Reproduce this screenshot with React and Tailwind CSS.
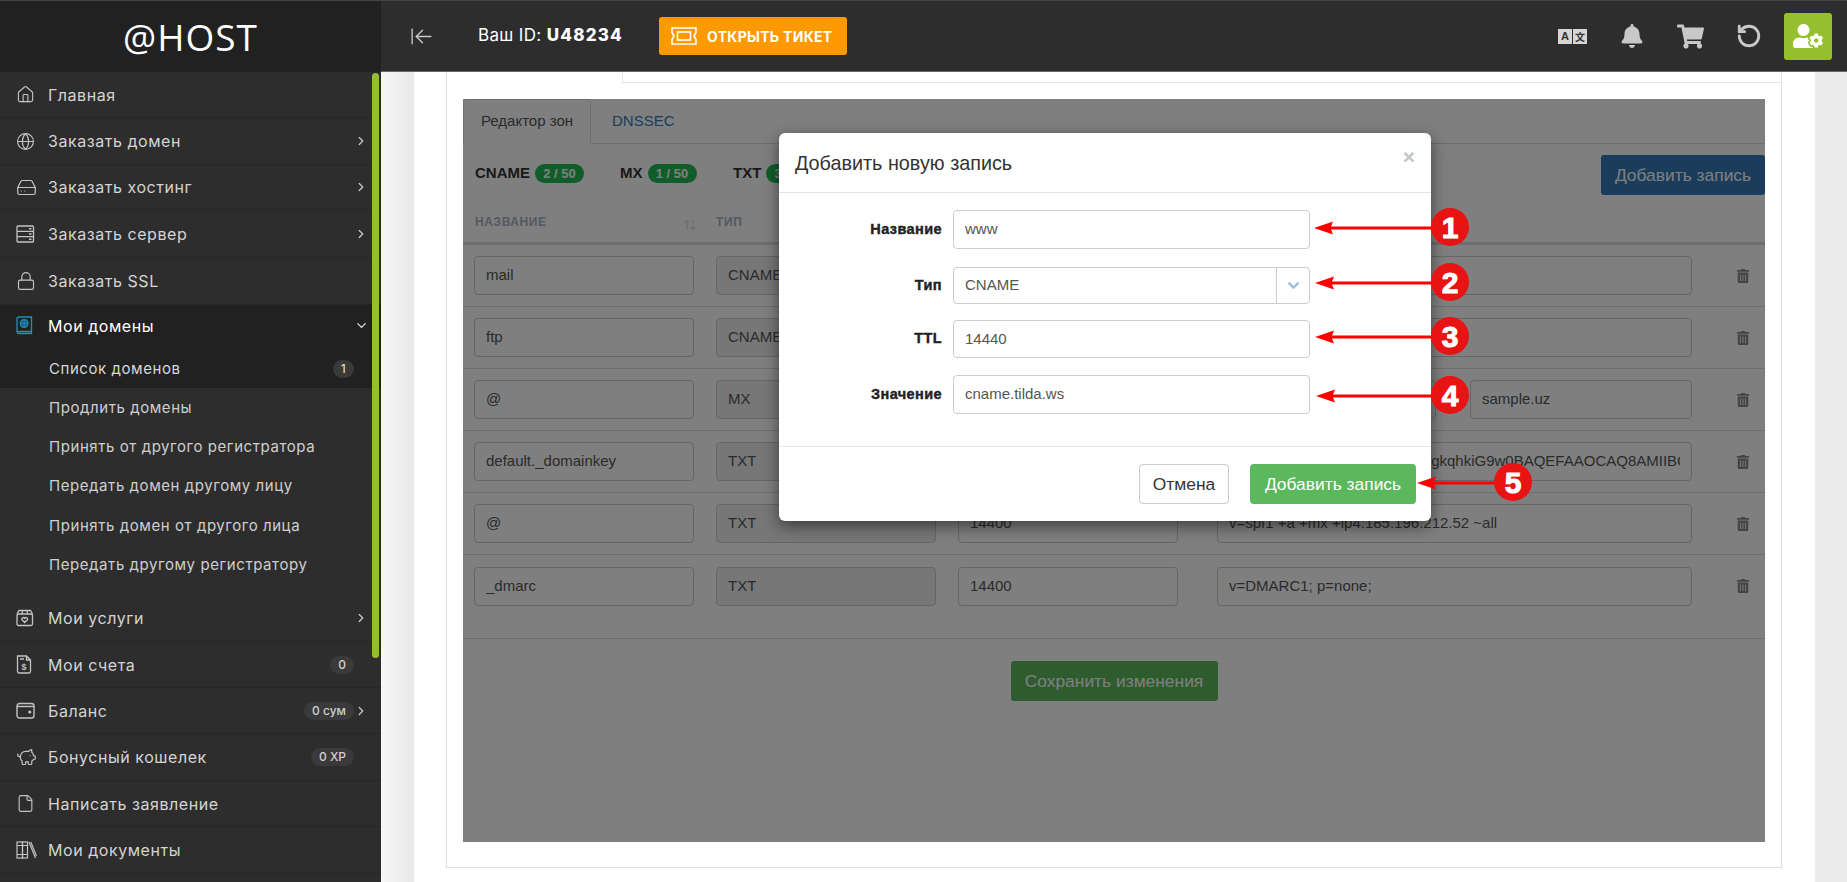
import React from "react";
import { ArrowLeftToLine, ArrowUpDown, ChevronDown, ChevronRight, File, Globe, HardDrive, House, Lock, PiggyBank, RotateCcw } from "lucide-react";
import { FaBell, FaShoppingCart, FaTrashAlt, FaUserCog } from "react-icons/fa";

const side = "font-['Inter','Liberation_Sans',sans-serif]";

function BookIcon() {
  return (
    <svg width="17" height="19" viewBox="0 0 17 19" fill="none" stroke="#1f8fb8" strokeWidth="1.3">
      <path d="M1 16V2.500A1.500 1.500 0 0 1 2.500 1H15.500V17.500H2.500A1.500 1.500 0 0 1 1 16ZM1 15.500H15.500" />
      <circle cx="8.200" cy="7.500" r="3.800" fill="#155f7c" />
      <path d="M4.400 7.500H12M8.200 3.700V11.300" strokeWidth="0.8" />
    </svg>
  );
}

function BoxIcon() {
  return (
    <svg width="18" height="18" viewBox="0 0 18 18" fill="none" stroke="#c4c4c4" strokeWidth="1.300">
      <rect x="1" y="5" width="15.500" height="11.500" rx="1.500" />
      <path d="M1 5 3 1.500H14.500L16.500 5M6.500 1.500 6 5M11 1.500 11.500 5" />
      <path d="M8.700 13.500 6 10.800C5 9 7.600 7.600 8.700 9.300 9.800 7.600 12.400 9 11.400 10.800Z" />
    </svg>
  );
}

function InvoiceIcon() {
  return (
    <svg width="16" height="19" viewBox="0 0 16 19" fill="none" stroke="#c4c4c4" strokeWidth="1.300">
      <path d="M1.500 1H10.500L14.500 5V16.500A1.500 1.500 0 0 1 13 18H3A1.500 1.500 0 0 1 1.500 16.500ZM10.500 1V5H14.500M4 4H8" />
      <text x="8" y="15" textAnchor="middle" fontSize="9" fontWeight="700" fill="#c4c4c4" stroke="none" fontFamily="Liberation Sans">$</text>
    </svg>
  );
}

function ServerIcon() {
  return (
    <svg width="19" height="18" viewBox="0 0 19 18" fill="none" stroke="#c4c4c4" strokeWidth="1.300">
      <rect x="1" y="1" width="16.500" height="16" rx="1" />
      <path d="M1 6.300H17.500M1 11.700H17.500" />
      <path d="M13 3.700H15.500M13 9H15.500M13 14.300H15.500" strokeWidth="1.500" />
    </svg>
  );
}

function WalletIcon() {
  return (
    <svg width="19" height="17" viewBox="0 0 19 17" fill="none" stroke="#c4c4c4" strokeWidth="1.400">
      <rect x="1" y="1.500" width="17" height="14.500" rx="2.500" />
      <path d="M1 4.500H18" />
      <circle cx="13.800" cy="10" r="0.900" fill="#c4c4c4" />
    </svg>
  );
}

function LibraryIcon() {
  return (
    <svg width="21" height="18" viewBox="0 0 21 18" fill="none" stroke="#c4c4c4" strokeWidth="1.200">
      <rect x="1" y="1" width="5.500" height="16" />
      <rect x="6.500" y="1" width="5" height="16" />
      <path d="M1 4.500H11.500M1 13.500H11.500M13 1 19.500 17M14.800 1 20.500 15" />
    </svg>
  );
}

function TicketIcon() {
  return (
    <svg width="26" height="18" viewBox="0 0 26 18" fill="none" stroke="#fff" strokeWidth="1.600">
      <path d="M1 1H25V5.500L23 9 25 12.500V17H1V12.500L3 9 1 5.500Z" />
      <rect x="6.500" y="5" width="13" height="8" />
    </svg>
  );
}

const iconProps = { size: 19, strokeWidth: 1.4, color: "#c4c4c4" };

function Badge({ children, className = "" }) {
  return (
    <span className={`flex h-[18px] items-center justify-center rounded-full bg-[#3a3a3a] text-[12px] font-medium text-[#d0d0d0] ${className}`}>
      {children}
    </span>
  );
}

function MainItem({ icon, label, h = "h-[47px]", arrow, badge }) {
  return (
    <div className={`flex shrink-0 items-center border-b border-[#262626] pl-4 pr-[13px] text-[#d4d4d4] ${h}`}>
      <span className="flex w-8 shrink-0 items-center">{icon}</span>
      <span className="text-[16px] tracking-[0.55px]">{label}</span>
      <span className="ml-auto flex items-center">
        {badge}
        {arrow ? <ChevronRight size={14} strokeWidth={2.2} color="#c8c8c8" /> : <span className={badge ? "w-[14px]" : ""} />}
      </span>
    </div>
  );
}

function SubItem({ label, h = "h-[39px]" }) {
  return (
    <div className={`flex shrink-0 items-center pl-[49px] text-[15px] tracking-[0.57px] text-[#cfcfcf] ${h}`}>{label}</div>
  );
}

function Sidebar() {
  return (
    <aside className={`relative flex w-[381px] shrink-0 flex-col overflow-hidden bg-[#2d2d2d] ${side}`}>
      <div className="flex h-[72px] shrink-0 items-center justify-center border-t border-[#444] bg-[#212121] font-['Open_Sans',sans-serif] text-[37px] tracking-[1px] text-white">
        @HOST
      </div>
      <MainItem h="h-[46px]" icon={<House {...iconProps} />} label="Главная" />
      <MainItem icon={<Globe {...iconProps} />} label="Заказать домен" arrow />
      <MainItem h="h-[45px]" icon={<HardDrive {...iconProps} size={21} />} label="Заказать хостинг" arrow />
      <MainItem h="h-[48px]" icon={<ServerIcon />} label="Заказать сервер" arrow />
      <MainItem icon={<Lock {...iconProps} size={20} />} label="Заказать SSL" />
      <div className="flex h-[40px] shrink-0 items-center bg-[#212121] pl-4 pr-[12px] pt-[1px] text-white">
        <span className="flex w-8 shrink-0 items-center"><BookIcon /></span>
        <span className="text-[16px] tracking-[0.55px]">Мои домены</span>
        <ChevronDown size={15} strokeWidth={2.2} color="#ddd" className="ml-auto" />
      </div>
      <div className="flex h-[43px] shrink-0 items-center bg-[#212121] pl-[49px] pr-[27px] pt-[5px] text-[15px] tracking-[0.57px] text-[#d8d8d8]">
        Список доменов
        <Badge className="ml-auto w-[21px] text-[#e0d9a8]">1</Badge>
      </div>
      <SubItem h="h-[40px]" label="Продлить домены" />
      <SubItem label="Принять от другого регистратора" />
      <SubItem label="Передать домен другому лицу" />
      <SubItem h="h-[40px]" label="Принять домен от другого лица" />
      <SubItem label="Передать другому регистратору" />
      <div className="h-[10px] shrink-0" />
      <MainItem icon={<BoxIcon />} label="Мои услуги" arrow />
      <MainItem h="h-[46px]" icon={<InvoiceIcon />} label="Мои счета" badge={<Badge className="w-[24px]">0</Badge>} />
      <MainItem h="h-[46px]" icon={<WalletIcon />} label="Баланс" arrow badge={<Badge className="w-[50px]">0 сум</Badge>} />
      <MainItem icon={<PiggyBank {...iconProps} size={21} />} label="Бонусный кошелек" badge={<Badge className="w-[43px]">0 XP</Badge>} />
      <MainItem h="h-[46px]" icon={<File {...iconProps} />} label="Написать заявление" />
      <MainItem icon={<LibraryIcon />} label="Мои документы" />
      <div className="absolute left-[372px] top-[73px] h-[585px] w-[7px] rounded-full bg-[#95bf2f]" />
    </aside>
  );
}

function Topbar() {
  return (
    <header className={`flex h-[72px] shrink-0 items-center border-b border-t border-b-[#666] border-t-[#444] bg-[#2d2d2d] pr-[15px] ${side}`}>
      <ArrowLeftToLine size={25} strokeWidth={1.300} color="#c8c8c8" className="ml-[28px]" />
      <span className="ml-[44px] w-[181px] whitespace-nowrap text-[17px] tracking-[0.35px] text-white">Ваш ID: <b className="font-extrabold tracking-[1.200px]">U48234</b></span>
      <button className="flex h-[38px] w-[188px] items-center gap-[10px] rounded-[3px] bg-[#ff9900] pl-3 text-[14px] font-bold tracking-[0.3px] text-white">
        <TicketIcon />
        ОТКРЫТЬ ТИКЕТ
      </button>
      <div className="ml-auto flex items-center">
        <div className="flex h-[15px] w-[29px] gap-[1px] font-['Liberation_Sans',sans-serif] text-[11px] font-bold leading-[15px] text-[#333]">
          <span className="w-[14px] bg-[#d6d6d6] text-center">A</span>
          <span className="w-[14px] bg-[#d6d6d6] text-center font-['Noto_Sans_CJK_SC',sans-serif] text-[10px]">文</span>
        </div>
        <FaBell size={24} color="#c8c8c8" className="ml-[33px]" />
        <FaShoppingCart size={27} color="#c8c8c8" className="ml-[33px]" />
        <RotateCcw size={26} strokeWidth={2.600} color="#c8c8c8" className="ml-[32px]" />
        <div className="ml-[22px] flex h-[47px] w-[48px] items-center justify-center rounded-[3px] bg-[#95bf2f]">
          <FaUserCog size={30} color="#fff" />
        </div>
      </div>
    </header>
  );
}

function Field({ value, className = "", bg = "bg-white" }) {
  return (
    <div className={`flex h-[39px] items-center whitespace-nowrap rounded border border-[#ccc] px-[11px] text-[15px] text-[#555] ${bg} ${className}`}>
      <span className="block overflow-hidden">{value}</span>
    </div>
  );
}

const rows = [
  ["mail", "CNAME", "14400", "cname.tilda.ws"],
  ["ftp", "CNAME", "14400", "cname.tilda.ws"],
  ["@", "MX", "14400", null],
  ["default._domainkey", "TXT", "14400", "v=DKIM1; k=rsa; p=MIIBIjANBgkqhkiG9w0BAQEFAAOCAQ8AMIIBCgKCAQEA"],
  ["@", "TXT", "14400", "v=spf1 +a +mx +ip4:185.196.212.52 ~all"],
  ["_dmarc", "TXT", "14400", "v=DMARC1; p=none;"],
];

function ZoneRow({ r, last }) {
  return (
    <div className={`grid h-[62px] grid-cols-[220px_220px_220px_475px_1fr] items-center gap-x-[22px] px-[11px] ${last ? "" : "border-b border-[#ddd]"}`}>
      <Field value={r[0]} />
      <Field value={r[1]} bg="bg-[#eee]" />
      <Field value={r[2]} />
      {r[3] ? (
        <Field value={r[3]} className="ml-[17px] w-[475px]" />
      ) : (
        <div className="ml-[17px] flex w-[475px] justify-between">
          <Field value="10" className="w-[219px]" />
          <Field value="sample.uz" className="w-[222px]" />
        </div>
      )}
      <FaTrashAlt size={14} color="#888" className="ml-[39px]" />
    </div>
  );
}

function Counter({ name, badge, className = "" }) {
  return (
    <div className={`flex items-center gap-[5px] text-[15px] font-bold text-[#333] ${className}`}>
      {name}
      <span className="flex h-[19px] w-[49px] items-center justify-center rounded-full bg-[#23ba52] text-[13px] text-white">{badge}</span>
    </div>
  );
}

function ModalRow({ label, h, mt, children }) {
  return (
    <div className={`flex items-center ${h} ${mt}`}>
      <label className="w-[163px] pr-[11px] text-right text-[14.500px] font-bold tracking-[0.4px] text-[#222] [-webkit-text-stroke:0.4px_#222]">{label}</label>
      {children}
    </div>
  );
}

function ModalInput({ value, h }) {
  return (
    <div className={`flex w-[357px] items-center rounded border border-[#ccc] px-[11px] text-[15px] text-[#555] ${h}`}>{value}</div>
  );
}

function Modal() {
  return (
    <div className="absolute left-[316px] top-[34px] flex h-[388px] w-[652px] flex-col rounded-[6px] bg-white shadow-[0_5px_15px_rgba(0,0,0,0.5)]">
      <div className="flex h-[60px] shrink-0 items-center border-b border-[#e5e5e5] pl-4 pr-[16px] pt-[2px] text-[19.800px] text-[#333]">
        Добавить новую запись
        <span className="mb-[13px] ml-auto text-[21px] font-bold text-[#c4c4c4]">×</span>
      </div>
      <div className="h-[254px] shrink-0 border-b border-[#e5e5e5] pl-[11px] pt-[17px]">
        <ModalRow label="Название" h="h-[39px]" mt="mt-0"><ModalInput value="www" h="h-[39px]" /></ModalRow>
        <ModalRow label="Тип" h="h-[37px]" mt="mt-[18px]">
          <div className="flex h-[37px] w-[357px] items-center rounded border border-[#ccc] text-[15px] text-[#555]">
            <span className="flex-1 pl-[11px]">CNAME</span>
            <span className="flex h-full w-[33px] items-center justify-center border-l border-[#ccc]">
              <ChevronDown size={17} strokeWidth={3.400} color="#9dbfdc" />
            </span>
          </div>
        </ModalRow>
        <ModalRow label="TTL" h="h-[38px]" mt="mt-[16px]"><ModalInput value="14440" h="h-[38px]" /></ModalRow>
        <ModalRow label="Значение" h="h-[39px]" mt="mt-[17px]"><ModalInput value="cname.tilda.ws" h="h-[39px]" /></ModalRow>
      </div>
      <div className="flex flex-1 items-start justify-end gap-[21px] pr-[15px] pt-[17px] text-[17.400px]">
        <button className="h-[40px] w-[90px] rounded border border-[#ccc] bg-white text-[#333]">Отмена</button>
        <button className="h-[40px] w-[166px] rounded bg-[#5cb85c] text-white">Добавить запись</button>
      </div>
    </div>
  );
}

function Mark({ n, tipX, y, cx = 1450 }) {
  return (
    <>
      <svg className="absolute" style={{ left: tipX, top: y - 7 }} width={cx - tipX} height="14" viewBox={`0 0 ${cx - tipX} 14`}>
        <path d={`M0 7 19 0.500 17 5.500H${cx - tipX}V8.500H17L19 13.500Z`} fill="#f00" />
      </svg>
      <div className="absolute flex h-[38px] w-[38px] items-center justify-center rounded-full bg-[#e81313] font-['Liberation_Sans',sans-serif] text-[30px] font-bold text-white [-webkit-text-stroke:1px_white]" style={{ left: cx - 19, top: y - 20 }}>
        {n}
      </div>
    </>
  );
}

function Content() {
  return (
    <main className="flex min-h-0 flex-1 bg-[#ececec] font-['Liberation_Sans',sans-serif]">
      <div className="w-[33px] shrink-0 bg-gradient-to-r from-[#f7f7f7] to-[#e8e8e8]" />
      <div className="flex w-[1401px] shrink-0 flex-col bg-white pl-[32px] pr-[33px]">
        <div className="flex h-[11px] shrink-0">
          <div className="w-[176px] border-l border-[#ddd]" />
          <div className="flex-1 border-b border-l border-r border-[#e5e5e5]" />
        </div>
        <div className="relative h-[785px] shrink-0 border-b border-l border-r border-[#ddd] p-4">
          <div className="relative h-[743px] overflow-hidden bg-white">
            <div className="flex h-[45px] border-b border-[#ddd] text-[15px]">
              <div className="flex h-[45px] w-[128px] items-center justify-center rounded-t border border-[#ddd] border-b-white bg-white text-[#555]">Редактор зон</div>
              <div className="ml-[21px] flex items-center text-[#337ab7]">DNSSEC</div>
            </div>
            <div className="relative h-[101px] border-b-[3px] border-[#ddd]">
              <div className="flex pl-3 pt-[18px]">
                <Counter name="CNAME" badge="2 / 50" className="w-[145px]" />
                <Counter name="MX" badge="1 / 50" className="w-[113px]" />
                <Counter name="TXT" badge="3 / 50" />
              </div>
              <button className="absolute right-0 top-[11px] h-[40px] w-[164px] rounded-[3px] bg-[#337ab7] text-[17.400px] text-white">Добавить запись</button>
              <div className="absolute left-3 top-[69px] text-[12px] font-bold tracking-[0.6px] text-[#a8b0c4]">НАЗВАНИЕ</div>
              <ArrowUpDown size={14} color="#dedede" className="absolute left-[220px] top-[74px]" />
              <div className="absolute left-[253px] top-[69px] text-[12px] font-bold tracking-[0.6px] text-[#a8b0c4]">ТИП</div>
            </div>
            {rows.map((r, i) => <ZoneRow key={i} r={r} last={i === rows.length - 1} />)}
            <div className="h-[22px] border-b border-[#ddd]" />
            <div className="flex justify-center pt-[22px]">
              <button className="h-[40px] w-[207px] rounded-[3px] bg-[#5cb85c] text-[17.400px] text-white">Сохранить изменения</button>
            </div>
            <div className="absolute inset-0 bg-black/50" />
          </div>
          <div className="absolute left-[16px] top-[16px]"><Modal /></div>
        </div>
      </div>
    </main>
  );
}

export default function App() {
  return (
    <div className="relative flex h-[882px] w-[1847px] overflow-hidden bg-white">
      <Sidebar />
      <div className="flex min-w-0 flex-1 flex-col">
        <Topbar />
        <Content />
      </div>
      <Mark n="1" tipX={1314} y={228} />
      <Mark n="2" tipX={1315} y={283} />
      <Mark n="3" tipX={1315} y={337} />
      <Mark n="4" tipX={1316} y={396} />
      <Mark n="5" tipX={1417} y={483} cx={1513} />
    </div>
  );
}
